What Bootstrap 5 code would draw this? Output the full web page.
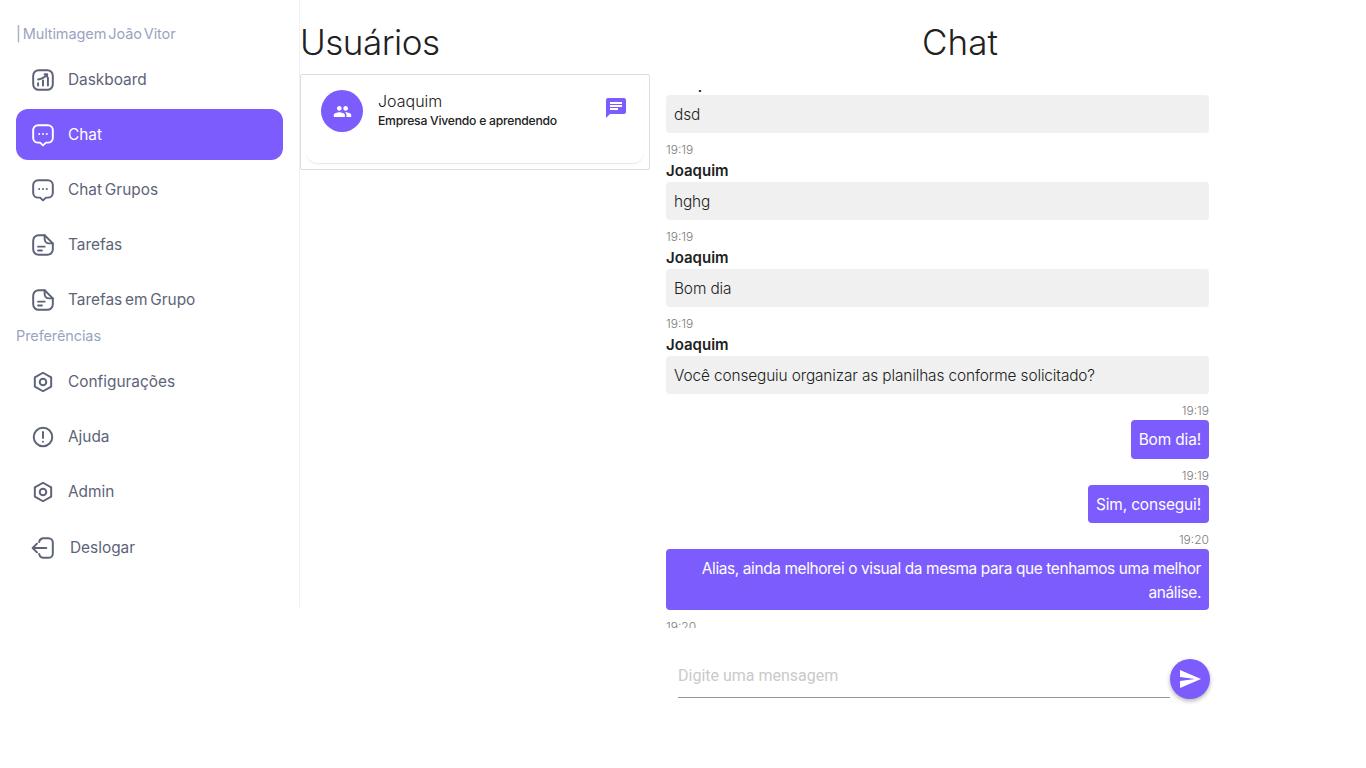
<!DOCTYPE html>
<html lang="pt-BR">
<head>
<meta charset="utf-8">
<title>Chat</title>
<link rel="stylesheet" href="https://cdn.jsdelivr.net/npm/bootstrap@5.3.0/dist/css/bootstrap.min.css">
<style>
html,body{height:100%;overflow:hidden}
body{font-family:Inter,"Liberation Sans",sans-serif;color:#212121;background:#fff}
.shell{width:1366px;height:768px}
.side{width:300px;height:607px;border-right:1px solid #f1f1f4;padding:24px 16px 0;flex:none}
.side-cap{font-size:14.5px;line-height:20px;color:#9aa4bf;letter-spacing:-.1px;word-spacing:-2px}
.side-list{width:267px}
.side-link{height:51px;padding-left:15px;border-radius:12px;color:#5d6378;font-size:15.4px;word-spacing:-1.5px;text-decoration:none;gap:13px;margin-top:4px}
.side-link svg{width:24px;height:24px;flex:none;fill:none;stroke:currentColor;stroke-width:1.8;stroke-linecap:round;stroke-linejoin:round}
.side-link.active-link{background:#7c5cfc;color:#fff}
.side-link.wide-gap{gap:15px;margin-top:5px}
.first-list{margin:10px 0 1px}
.second-list{margin-top:10px}
.first-list .side-link:first-child,.second-list .side-link:first-child{margin-top:0}
.col-users{width:350px;flex:none}
.page-title{font-size:35px;font-weight:300;line-height:42px;margin:21px 0 11px;color:#212121}
.page-title.users-title{letter-spacing:-.5px}
.user-box{height:96px;border:1px solid #dedede;border-radius:2px;padding:0 5px 5px}
.user-inner{height:100%;border-bottom:1px solid #e9e9e9;border-radius:0 0 12px 12px;padding:15px 16px 0 15px;box-shadow:0 1px 2px rgba(0,0,0,.03)}
.user-avatar{width:42px;height:42px;background:#7c5cfc;color:#fff;flex:none}
.user-avatar svg{width:19px;height:19px;fill:#fff}
.user-text{margin-left:15px}
.user-name{font-size:16px;line-height:22px;font-weight:300}
.user-sub{font-size:12.2px;line-height:16px;font-weight:500;letter-spacing:-.25px;margin-top:1px;color:#212121}
.user-chat{width:24px;height:24px;fill:#7c5cfc;margin-top:6px;flex:none}
.col-chat{width:620px;flex:none}
.chat-list{height:538px;width:543px;margin:27px 0 0 16px;overflow:hidden}
.msg-name{font-weight:600;font-size:15px;line-height:23px;color:#212121}
.msg-name.clipped{margin-top:-18px}
.msg-time{font-size:12px;line-height:22px;height:20px;color:#7b7b7b;font-weight:300}
.msg-bubble{padding:8px 8px 6px;line-height:24px;font-size:15.4px;border-radius:4px;margin-bottom:6px;font-weight:300;letter-spacing:-.12px}
.msg-in{background:#f0f0f0;color:#212121}
.msg-out{background:#7c5cfc;color:#fff;width:fit-content;max-width:100%;margin-left:auto;text-align:right;font-weight:400;line-height:24.5px}
.msg-out.long-text{letter-spacing:-.37px;line-height:23.5px}
.msg-time.out{text-align:right}
.chat-form{margin:31px 0 0 28px;width:532px;height:42px}
.chat-input{width:492px;height:39px;border:0;border-bottom:1px solid #949494;font-family:Roboto,sans-serif;font-size:16px;outline:0;padding:0 0 5px;background:transparent}
.chat-input::placeholder{color:#cacaca;opacity:1}
.send-btn{width:40px;height:40px;border:0;padding:0;background:#7c5cfc;box-shadow:0 2px 4px rgba(0,0,0,.3)}
.send-btn svg{width:24px;height:24px;fill:#fff}
</style>
</head>
<body>
<div class="shell d-flex">
  <nav class="side">
    <div class="side-cap">| Multimagem João Vitor</div>
    <div class="side-list first-list">
      <a href="#" class="side-link d-flex align-items-center"><svg viewBox="1 1 22 22"><rect x="3" y="3" width="18" height="18" rx="5"/><path d="M7.500 17v-2M12 17v-4.500M16.500 17v-7M7.500 11.500C10.500 11 13.500 9.500 15.500 7M13.500 6.800h2.300v2.300"/></svg>Daskboard</a>
      <a href="#" class="side-link active-link d-flex align-items-center"><svg viewBox="1 1 22 22"><path d="M7.500 3h9A4.500 4.500 0 0 1 21 7.500v7a4.500 4.500 0 0 1-4.500 4.500h-1.800L12 21.500 9.300 19H7.500A4.500 4.500 0 0 1 3 14.500v-7A4.500 4.500 0 0 1 7.500 3z"/><path d="M8.500 11h.01M12 11h.01M15.500 11h.01"/></svg>Chat</a>
      <a href="#" class="side-link d-flex align-items-center"><svg viewBox="1 1 22 22"><path d="M7.500 3h9A4.500 4.500 0 0 1 21 7.500v7a4.500 4.500 0 0 1-4.500 4.500h-1.800L12 21.500 9.300 19H7.500A4.500 4.500 0 0 1 3 14.500v-7A4.500 4.500 0 0 1 7.500 3z"/><path d="M8.500 11h.01M12 11h.01M15.500 11h.01"/></svg>Chat Grupos</a>
      <a href="#" class="side-link d-flex align-items-center"><svg viewBox="1 1 22 22"><path d="M8 3h5.500L21 10.500V16a5 5 0 0 1-5 5H8a5 5 0 0 1-5-5V8a5 5 0 0 1 5-5z"/><path d="M13.500 3v3.500a4 4 0 0 0 4 4H21M7.500 13.500h6M7.500 17h3.500"/></svg>Tarefas</a>
      <a href="#" class="side-link d-flex align-items-center"><svg viewBox="1 1 22 22"><path d="M8 3h5.500L21 10.500V16a5 5 0 0 1-5 5H8a5 5 0 0 1-5-5V8a5 5 0 0 1 5-5z"/><path d="M13.500 3v3.500a4 4 0 0 0 4 4H21M7.500 13.500h6M7.500 17h3.500"/></svg>Tarefas em Grupo</a>
    </div>
    <div class="side-cap">Preferências</div>
    <div class="side-list second-list">
      <a href="#" class="side-link d-flex align-items-center"><svg viewBox="1 1 22 22"><path d="M12 3.500l7.500 4.300v8.400L12 20.500l-7.500-4.300V7.800z"/><circle cx="12" cy="12" r="3"/></svg>Configurações</a>
      <a href="#" class="side-link d-flex align-items-center"><svg viewBox="1 1 22 22"><circle cx="12" cy="12" r="8.500"/><path d="M12 7.500v5.500M12 16.300h.01"/></svg>Ajuda</a>
      <a href="#" class="side-link d-flex align-items-center"><svg viewBox="1 1 22 22"><path d="M12 3.500l7.500 4.300v8.400L12 20.500l-7.500-4.300V7.800z"/><circle cx="12" cy="12" r="3"/></svg>Admin</a>
      <a href="#" class="side-link wide-gap d-flex align-items-center"><svg viewBox="1 1 22 22"><path d="M8.500 6.500A4 4 0 0 1 12 3h5a4 4 0 0 1 4 4v10a4 4 0 0 1-4 4h-5a4 4 0 0 1-3.500-3.500M2.500 12H15M6.500 8l-4 4 4 4"/></svg>Deslogar</a>
    </div>
  </nav>
  <section class="col-users">
    <h1 class="page-title users-title">Usuários</h1>
    <div class="user-box">
      <div class="user-inner d-flex">
        <div class="user-avatar rounded-circle d-flex align-items-center justify-content-center"><svg viewBox="0 0 24 24"><path d="M16 11c1.660 0 2.990-1.340 2.990-3S17.660 5 16 5c-1.660 0-3 1.340-3 3s1.340 3 3 3zm-8 0c1.660 0 2.990-1.340 2.990-3S9.660 5 8 5C6.340 5 5 6.340 5 8s1.340 3 3 3zm0 2c-2.330 0-7 1.170-7 3.500V19h14v-2.500c0-2.330-4.670-3.500-7-3.500zm8 0c-.290 0-.620.020-.970.050 1.160.840 1.970 1.970 1.970 3.450V19h6v-2.500c0-2.330-4.670-3.500-7-3.500z"/></svg></div>
        <div class="user-text flex-grow-1">
          <div class="user-name">Joaquim</div>
          <div class="user-sub">Empresa Vivendo e aprendendo</div>
        </div>
        <svg class="user-chat" viewBox="0 0 24 24"><path d="M20 2H4c-1.100 0-1.990.900-1.990 2L2 22l4-4h14c1.100 0 2-.900 2-2V4c0-1.100-.900-2-2-2zM6 9h12v2H6V9zm8 5H6v-2h8v2zm4-6H6V6h12v2z"/></svg>
      </div>
    </div>
  </section>
  <section class="col-chat">
    <h1 class="page-title text-center">Chat</h1>
    <div class="chat-list">
      <div class="msg-name clipped">Joaquim</div>
      <div class="msg-bubble msg-in">dsd</div>
      <div class="msg-time">19:19</div>
      <div class="msg-name">Joaquim</div>
      <div class="msg-bubble msg-in">hghg</div>
      <div class="msg-time">19:19</div>
      <div class="msg-name">Joaquim</div>
      <div class="msg-bubble msg-in">Bom dia</div>
      <div class="msg-time">19:19</div>
      <div class="msg-name">Joaquim</div>
      <div class="msg-bubble msg-in">Você conseguiu organizar as planilhas conforme solicitado?</div>
      <div class="msg-time out">19:19</div>
      <div class="msg-bubble msg-out">Bom dia!</div>
      <div class="msg-time out">19:19</div>
      <div class="msg-bubble msg-out">Sim, consegui!</div>
      <div class="msg-time out">19:20</div>
      <div class="msg-bubble msg-out long-text">Alias, ainda melhorei o visual da mesma para que tenhamos uma melhor análise.</div>
      <div class="msg-time">19:20</div>
    </div>
    <form class="chat-form d-flex align-items-start" onsubmit="return false">
      <input class="chat-input" type="text" placeholder="Digite uma mensagem">
      <button class="send-btn rounded-circle d-flex align-items-center justify-content-center" type="button" aria-label="Enviar"><svg viewBox="0 0 24 24"><path d="M2.010 21L23 12 2.010 3 2 10l15 2-15 2z"/></svg></button>
    </form>
  </section>
</div>
<script src="https://cdn.jsdelivr.net/npm/bootstrap@5.3.0/dist/js/bootstrap.bundle.min.js"></script>
</body>
</html>
